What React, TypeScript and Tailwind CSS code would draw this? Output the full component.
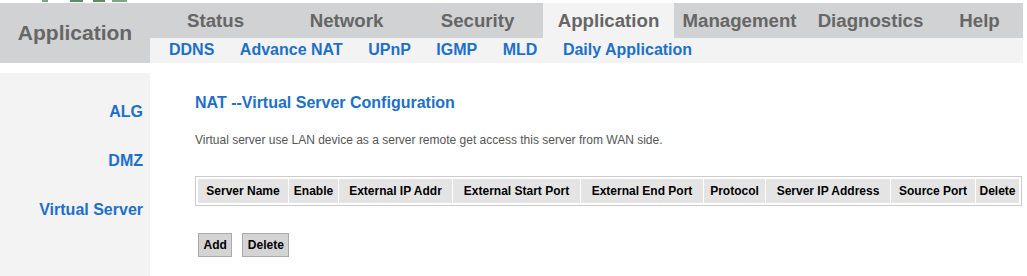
const tabs = ["Status", "Network", "Security", "Application", "Management", "Diagnostics"];
const subs = ["DDNS", "Advance NAT", "UPnP", "IGMP", "MLD", "Daily Application"];
const side = ["ALG", "DMZ", "Virtual Server"];
const cols: [string, number][] = [
  ["Server Name", 90],
  ["Enable", 49],
  ["External IP Addr", 113],
  ["External Start Port", 127],
  ["External End Port", 122],
  ["Protocol", 61],
  ["Server IP Address", 124],
  ["Source Port", 84],
  ["Delete", 43],
];

function LogoStrip() {
  // bottom edge of the cut-off logo image
  return (
    <svg width="160" height="3" className="block">
      <rect x="42" y="0" width="6" height="2" fill="#7fa588" />
      <rect x="70" y="0" width="13" height="2" fill="#5d8c69" />
      <rect x="93" y="0" width="12" height="2" fill="#5d8c69" />
      <rect x="112" y="0" width="15" height="2" fill="#7fa588" />
    </svg>
  );
}

export default function App() {
  return (
    <div className="w-[1027px] h-[276px] overflow-hidden bg-white font-['Liberation_Sans',Arial,sans-serif]">
      <div className="h-[3px]">
        <LogoStrip />
      </div>

      <div className="flex h-[60px]">
        <div className="w-[150px] bg-[#d1d2d3] flex items-center justify-center text-[21px] font-bold text-[#666]">
          Application
        </div>
        <div className="w-[873px] flex flex-col">
          <div className="h-[35px] flex bg-[#d1d2d3]">
            {tabs.map((t) => (
              <div
                key={t}
                className={
                  "w-[131px] flex items-center justify-center text-[18.67px] font-bold text-[#666] " +
                  (t === "Application" ? "bg-[#f3f3f3]" : "")
                }
              >
                {t}
              </div>
            ))}
            <div className="flex-1 flex items-center justify-center text-[18.67px] font-bold text-[#666]">
              Help
            </div>
          </div>
          <div className="h-[25px] bg-[#f3f3f3] flex items-center pl-[19px] pb-[2px] gap-[25.5px] text-[16px] font-bold text-[#1d70c9]">
            {subs.map((s) => (
              <span key={s}>{s}</span>
            ))}
          </div>
        </div>
      </div>

      <div className="flex mt-[10px] h-[203px]">
        <div className="w-[150px] bg-[#f3f3f3] pt-[14px]">
          {side.map((s) => (
            <div key={s} className="h-[49px] flex items-center justify-end pr-[7px] text-[16px] font-bold text-[#1d70c9]">
              {s}
            </div>
          ))}
        </div>

        <div className="flex-1 pl-[45px] pt-[20px]">
          <h1 className="text-[16px] leading-[20px] font-bold text-[#1d70c9]">NAT --Virtual Server Configuration</h1>
          <p className="mt-[19px] text-[12px] leading-[16px] text-[#555]">
            Virtual server use LAN device as a server remote get access this server from WAN side.
          </p>

          <div className="mt-[28px] w-[827px] border border-[#ccc] p-[1px]">
            <table className="table-fixed border-separate border-spacing-[1px] w-[823px]">
              <thead>
                <tr>
                  {cols.map(([c, w]) => (
                    <th
                      key={c}
                      style={{ width: w }}
                      className="h-[24px] p-0 bg-[#e4e4e4] text-[12px] font-bold text-black text-center whitespace-nowrap"
                    >
                      {c}
                    </th>
                  ))}
                </tr>
              </thead>
            </table>
          </div>

          <div className="mt-[27px] flex gap-[10px] pl-[3px]">
            <button className="h-[24px] px-[4.5px] bg-[#d4d4d4] border border-[#aaa] text-[12px] font-bold text-black">
              Add
            </button>
            <button className="h-[24px] px-[4.5px] bg-[#d4d4d4] border border-[#aaa] text-[12px] font-bold text-black">
              Delete
            </button>
          </div>
        </div>
      </div>
    </div>
  );
}
